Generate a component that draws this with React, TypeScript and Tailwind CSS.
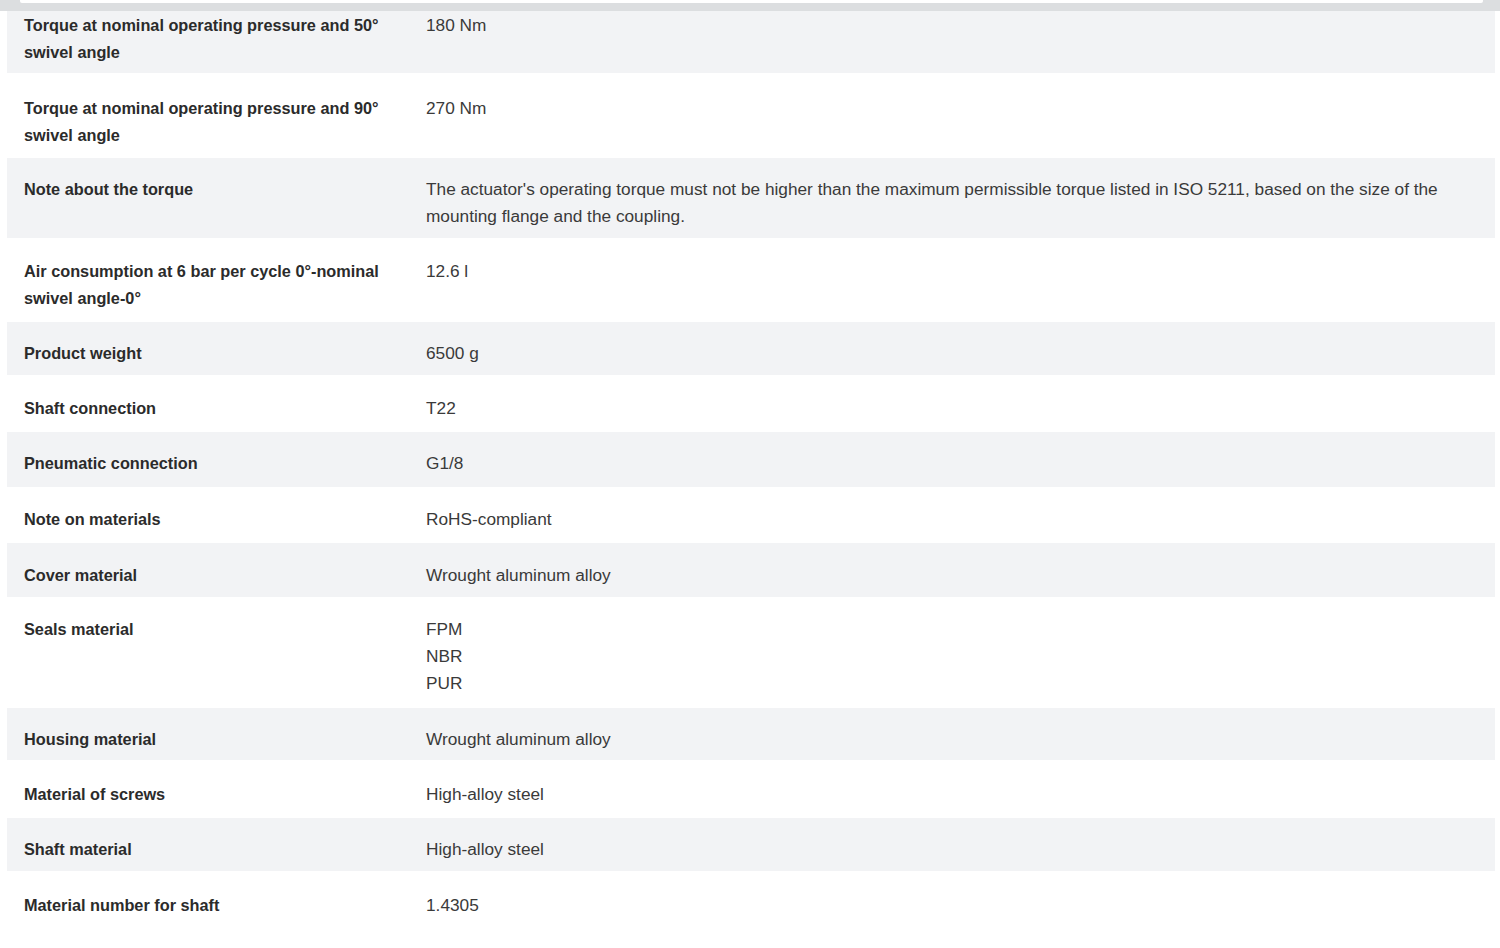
import React from "react";

type Row = { label: string; value: string[]; h: string; pt: string };

const rows: Row[] = [
  { label: "Torque at nominal operating pressure and 50° swivel angle", value: ["180 Nm"], h: "h-[62px]", pt: "pt-[1px]" },
  { label: "Torque at nominal operating pressure and 90° swivel angle", value: ["270 Nm"], h: "h-[85px]", pt: "pt-[22px]" },
  { label: "Note about the torque", value: ["The actuator's operating torque must not be higher than the maximum permissible torque listed in ISO 5211, based on the size of the mounting flange and the coupling."], h: "h-[80px]", pt: "pt-[18px]" },
  { label: "Air consumption at 6 bar per cycle 0°-nominal swivel angle-0°", value: ["12.6 l"], h: "h-[84px]", pt: "pt-[20px]" },
  { label: "Product weight", value: ["6500 g"], h: "h-[53px]", pt: "pt-[18px]" },
  { label: "Shaft connection", value: ["T22"], h: "h-[57px]", pt: "pt-[20px]" },
  { label: "Pneumatic connection", value: ["G1/8"], h: "h-[55px]", pt: "pt-[18px]" },
  { label: "Note on materials", value: ["RoHS-compliant"], h: "h-[56px]", pt: "pt-[19px]" },
  { label: "Cover material", value: ["Wrought aluminum alloy"], h: "h-[54px]", pt: "pt-[19px]" },
  { label: "Seals material", value: ["FPM", "NBR", "PUR"], h: "h-[111px]", pt: "pt-[19px]" },
  { label: "Housing material", value: ["Wrought aluminum alloy"], h: "h-[52px]", pt: "pt-[18px]" },
  { label: "Material of screws", value: ["High-alloy steel"], h: "h-[58px]", pt: "pt-[21px]" },
  { label: "Shaft material", value: ["High-alloy steel"], h: "h-[53px]", pt: "pt-[18px]" },
  { label: "Material number for shaft", value: ["1.4305"], h: "h-[80px]", pt: "pt-[21px]" },
];

export default function App() {
  return (
    <div
      className="w-[1500px] h-[948px] overflow-hidden bg-white leading-[27px] text-[#333333]"
      style={{ fontFamily: '"Liberation Sans", Arial, sans-serif' }}
    >
      <div className="h-[11px] bg-[#dcdee0] pl-[20px] pr-[17px]">
        <div className="h-[3px] bg-white rounded-b-[2px]" />
      </div>
      <div className="pl-[7px] pr-[5px]">
        {rows.map((r, i) => (
          <div
            key={i}
            className={`flex ${r.h} ${r.pt} pl-[17px] pr-[30px] ${i % 2 === 0 ? "bg-[#f2f3f5]" : "bg-white"}`}
          >
            <div className="w-[402px] shrink-0 pr-[20px] font-bold text-[16.3px] text-[#2b2b2b]">{r.label}</div>
            <div className="flex-1 text-[17.25px] text-[#3a3a3a]">
              {r.value.map((v, j) => (
                <div key={j}>{v}</div>
              ))}
            </div>
          </div>
        ))}
      </div>
    </div>
  );
}
